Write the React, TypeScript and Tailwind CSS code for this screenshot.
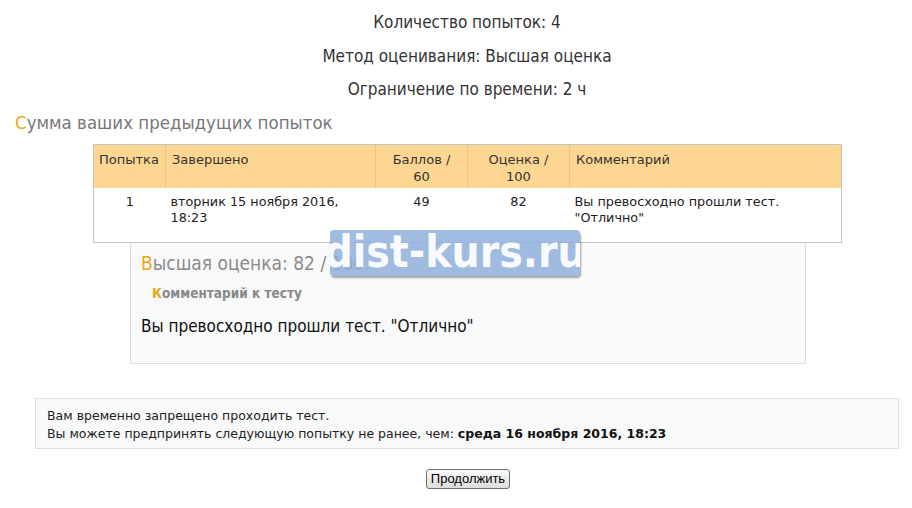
import React from "react";

const narrow = "font-['Liberation_Sans_Narrow','DejaVu_Sans_Condensed',sans-serif]";
const verdana = "font-['DejaVu_Sans','Verdana',sans-serif]";

function Accent({ text }: { text: string }) {
  return (
    <>
      <span className="text-[#e6a817]">{text[0]}</span>
      {text.slice(1)}
    </>
  );
}

export default function App() {
  return (
    <div className="relative w-[912px] h-[508px] overflow-hidden bg-white">
      {/* quiz info */}
      <div className={`pt-[12px] pl-[22px] text-center text-[17px] text-[#333] ${narrow}`}>
        <p className="h-[20px] leading-[20px]">Количество попыток: 4</p>
        <p className="mt-[14px] h-[20px] leading-[20px]">Метод оценивания: Высшая оценка</p>
        <p className="mt-[13px] h-[20px] leading-[20px]">Ограничение по времени: 2 ч</p>
      </div>

      <h3 className={`mt-[14px] ml-[15px] h-[20px] leading-[20px] text-[18.5px] text-[#777] ${narrow}`}>
        <Accent text="Сумма ваших предыдущих попыток" />
      </h3>

      {/* summary table */}
      <table className={`mt-[11px] ml-[93px] w-[749px] border border-[#c4c4c4] border-collapse ${verdana}`}>
        <thead>
          <tr className="bg-[#fdd691] text-[13px] leading-[17px] text-[#333] align-top h-[43px]">
            <th className="w-[72px] px-[5px] pt-[6px] text-left font-normal border-r border-[#f1c27a]">Попытка</th>
            <th className="w-[210px] px-[6px] pt-[6px] text-left font-normal border-r border-[#f1c27a]">Завершено</th>
            <th className="w-[92px] px-[4px] pt-[6px] text-center font-normal border-r border-[#f1c27a]">Баллов /<br />60</th>
            <th className="w-[102px] px-[4px] pt-[6px] text-center font-normal border-r border-[#f1c27a]">Оценка /<br />100</th>
            <th className="px-[6px] pt-[6px] text-left font-normal">Комментарий</th>
          </tr>
        </thead>
        <tbody>
          <tr className="text-[12.8px] leading-[16px] text-[#222] align-top h-[55px]">
            <td className="px-[5px] pt-[6px] text-center">1</td>
            <td className="px-[5px] pt-[6px]">вторник 15 ноября 2016,<br />18:23</td>
            <td className="px-[4px] pt-[6px] text-center">49</td>
            <td className="px-[4px] pt-[6px] text-center">82</td>
            <td className="px-[5px] pt-[6px]">Вы превосходно прошли тест.<br />"Отлично"</td>
          </tr>
        </tbody>
      </table>

      {/* feedback box */}
      <div className={`ml-[130px] w-[676px] h-[121px] border border-t-0 border-[#dcdcdc] bg-[#f8f9f9] px-[10px] ${narrow}`}>
        <p className="pt-[10px] h-[30px] leading-[20px] text-[19px] text-[#8a8a8a] whitespace-nowrap">
          <Accent text="Высшая оценка: 82 / 100." />
        </p>
        <p className="mt-[11px] ml-[11px] h-[18px] leading-[18px] text-[13.5px] font-bold text-[#888]">
          <Accent text="Комментарий к тесту" />
        </p>
        <p className="mt-[14px] h-[20px] leading-[20px] text-[17px] text-[#111]">
          Вы превосходно прошли тест. "Отлично"
        </p>
      </div>

      {/* attempt restriction */}
      <div className={`mt-[34px] ml-[35px] w-[864px] h-[51px] border border-[#e0e0e0] bg-[#f8f9f9] px-[11px] pt-[8px] text-[12.5px] leading-[18px] text-[#222] ${verdana}`}>
        <p>Вам временно запрещено проходить тест.</p>
        <p>
          Вы можете предпринять следующую попытку не ранее, чем:{" "}
          <b className="font-bold text-[#111]">среда 16 ноября 2016, 18:23</b>
        </p>
      </div>

      <div className="mt-[16px] ml-[426px]">
        <button className="w-[84px] h-[20px] rounded-[3px] border border-[#6f6f6f] bg-gradient-to-b from-[#fbfbfb] to-[#dcdcdc] font-['Liberation_Sans',Arial,sans-serif] text-[13px] leading-[18px] text-black">
          Продолжить
        </button>
      </div>

      {/* watermark (semi-transparent) */}
      <div className="absolute left-[330px] top-[230px] w-[250px] h-[46px] rounded-[4px] bg-[#8fb1dc]/85 shadow-[1px_2px_2px_rgba(0,0,0,0.35)] flex items-center justify-center overflow-hidden">
        <span className="font-['DejaVu_Sans_Condensed','DejaVu_Sans',sans-serif] font-bold text-[44px] leading-none text-white/95 whitespace-nowrap -mt-[2px]">
          dist-kurs.ru
        </span>
      </div>
    </div>
  );
}
